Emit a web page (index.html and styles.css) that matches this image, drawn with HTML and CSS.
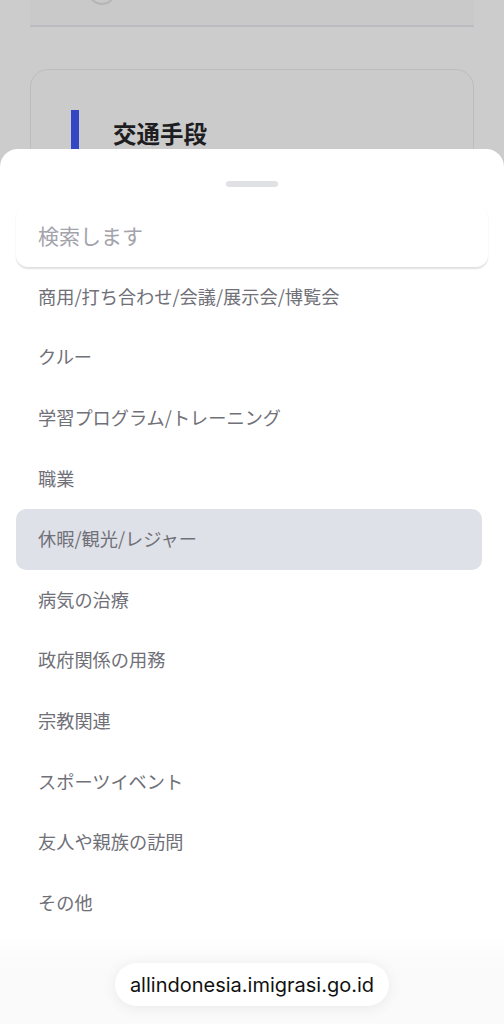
FILE: index.html
```html
<!DOCTYPE html>
<html lang="ja">
<head>
<meta charset="utf-8">
<link rel="stylesheet" href="styles.css">
</head>
<body>
<div class="page">
  <div class="topbox">
    <div class="radio"></div>
  </div>
  <div class="card">
    <div class="card-head">
      <span class="bar"></span>
      <span class="title">交通手段</span>
    </div>
  </div>
</div>

<div class="sheet">
  <div class="handle"></div>
  <div class="search">検索します</div>
  <ul class="list">
    <li class="item">商用/打ち合わせ/会議/展示会/博覧会</li>
    <li class="item">クルー</li>
    <li class="item">学習プログラム/トレーニング</li>
    <li class="item">職業</li>
    <li class="item selected">休暇/観光/レジャー</li>
    <li class="item">病気の治療</li>
    <li class="item">政府関係の用務</li>
    <li class="item">宗教関連</li>
    <li class="item">スポーツイベント</li>
    <li class="item">友人や親族の訪問</li>
    <li class="item">その他</li>
  </ul>
</div>

<div class="browserbar">
  <div class="url">allindonesia.imigrasi.go.id</div>
</div>
</body>
</html>
```

FILE: styles.css
```css
html, body {
  margin: 0;
  padding: 0;
}
body {
  width: 504px;
  height: 1024px;
  overflow: hidden;
  background: #cccccc;
  font-family: "Noto Sans CJK JP", "Noto Sans", sans-serif;
  position: relative;
}
.page {
  padding: 0 30px;
}
.topbox {
  height: 25px;
  border-bottom: 2px solid #bcbcc0;
  background: #c9c9c9;
  position: relative;
  overflow: hidden;
}
.radio {
  width: 24px;
  height: 24px;
  border-radius: 50%;
  border: 2px solid #b6b6b6;
  margin-left: 58px;
  margin-top: -23px;
}
.card {
  margin-top: 42px;
  height: 200px;
  border: 1px solid #bdbdc0;
  border-radius: 18px;
  background: #cbcbcb;
  padding: 40px 0 0 40px;
  box-sizing: border-box;
}
.card-head {
  display: flex;
  align-items: center;
  gap: 34px;
}
.bar {
  width: 8px;
  height: 48px;
  background: #3347c4;
}
.title {
  font-size: 23.5px;
  font-weight: 700;
  color: #1e1e22;
  margin-top: -2px;
}
.sheet {
  position: absolute;
  left: 0;
  right: 0;
  top: 149px;
  bottom: 0;
  background: #ffffff;
  border-radius: 18px 18px 0 0;
}
.handle {
  width: 52px;
  height: 6px;
  border-radius: 3px;
  background: #e0e1e5;
  margin: 32px auto 0;
}
.search {
  margin: 18px 16px 0;
  height: 62px;
  box-sizing: border-box;
  padding-left: 22px;
  padding-bottom: 3px;
  display: flex;
  align-items: center;
  font-size: 21px;
  color: #a3a3ab;
  border-radius: 12px;
  background: #fff;
  box-shadow: 0 1.5px 1.5px rgba(0, 0, 0, 0.12);
}
.list {
  list-style: none;
  margin: 0 22px 0 16px;
  padding: 0;
}
.item {
  height: 60.6px;
  display: flex;
  align-items: center;
  padding-left: 22px;
  padding-bottom: 3px;
  box-sizing: border-box;
  font-size: 18.2px;
  color: #707078;
  border-radius: 10px;
}
.item.selected {
  background: #dfe1e8;
}
.browserbar {
  position: absolute;
  left: 0;
  right: 0;
  bottom: 0;
  height: 90px;
  background: linear-gradient(to bottom, rgba(250,250,250,0) 0%, #fafafa 35%, #fafafa 100%);
  display: flex;
  justify-content: center;
  align-items: flex-start;
}
.url {
  margin-top: 29px;
  height: 43px;
  padding: 0 15px;
  border-radius: 22px;
  background: #ffffff;
  box-shadow: 0 2px 14px rgba(0, 0, 0, 0.07);
  display: flex;
  align-items: center;
  font-family: Inter, "Liberation Sans", sans-serif;
  font-size: 20px;
  color: #111;
}
```
